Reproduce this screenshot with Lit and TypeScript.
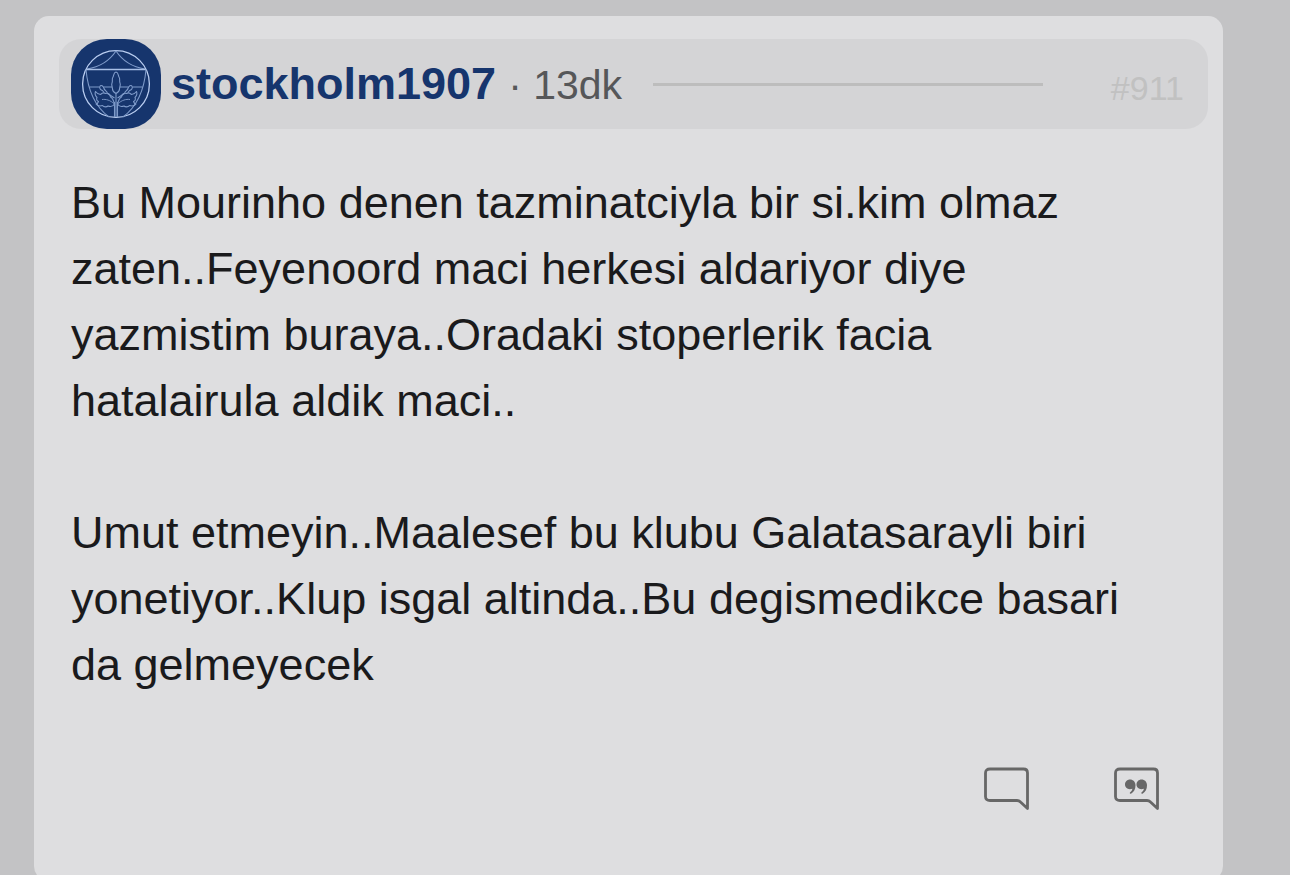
import { LitElement, html, css, svg } from "lit";
import { customElement, property } from "lit/decorators.js";

@customElement("club-avatar")
class ClubAvatar extends LitElement {
  static styles = css`
    :host { display: block; flex: none; }
    .badge { display: block; width: 90px; height: 90px; border-radius: 36px; background: #16356d; }
  `;

  private branch() {
    return svg`
      <path d="M43.500 78V63M43.500 59L36.500 54.500C36 52 33.500 51.500 33 49.500C32.500 47 30 45.500 28.800 47.500C28 49.500 30 51 31.500 51.500L33 53.500"></path>
      <path d="M43.500 65C42.500 61 41.500 59 39.500 58C39 55 37 53.500 34.500 54.500C32.500 53 30.500 54.500 29.500 55.500C27.500 55.500 26 54.500 24.500 52.500C23.500 55 24.500 57 26 58.500C25 60.500 26 62 27.500 62.500C27 64 26 65 25 65C27 67.500 30 67 31.500 66.500C33 68.500 36 68 37 67C39.500 68 42 67.500 43.500 65Z"></path>
      <path d="M31 60.500C35 60 39 61 43.500 65" stroke-width="0.9"></path>`;
  }

  render() {
    return html`<svg class="badge" viewBox="0 0 90 90" fill="none" role="img" aria-label="Avatar">
      <circle cx="45" cy="45" r="33.4" stroke="#b9cdf0" stroke-width="1.3"></circle>
      <g stroke="#7f9bca" stroke-width="1.1" stroke-linejoin="round">
        <path d="M16 30Q35 27 45 12Q55 27 74 30"></path>
        <path d="M15 30.500H75" stroke="#a9c0e6" stroke-width="1.400"></path>
        <path d="M15 30.500C17 54 26 69 38 78M75 30.500C73 54 64 69 52 78"></path>
        <path d="M18.500 48H28M33 48H41M49 48H57M62 48H71.500"></path>
        <path d="M45 33C42.500 33.500 43 36 42 38C40.500 40 42 42 41 44C40 46 41.500 48 41.500 50C41.500 52 43 53.500 45 54.500C47 53.500 48.500 52 48.500 50C48.500 48 50 46 49 44C48 42 49.500 40 48 38C47 36 47.500 33.500 45 33Z"></path>
        <path d="M45 54.500V78"></path>
        ${this.branch()}
        <g transform="translate(90 0) scale(-1 1)">${this.branch()}</g>
      </g>
    </svg>`;
  }
}

@customElement("post-card")
class PostCard extends LitElement {
  @property() author = "";
  @property() age = "";
  @property() number = "";
  @property({ attribute: false }) paragraphs: string[] = [];

  static styles = css`
    :host { display: block; }
    .card { background: #dedee0; border-radius: 15px; padding: 23px 15px 70px 25px; }
    .head { display: flex; align-items: center; height: 90px; padding: 0 24px 0 12px; border-radius: 22px; background: #d4d4d6; }
    .title { display: flex; align-items: baseline; gap: 12px; margin-left: 10px; }
    .author { color: #16356d; font-size: 45px; font-weight: 700; line-height: 90px; text-decoration: none; }
    .age { color: #565759; font-size: 41px; line-height: 1; white-space: nowrap; }
    .rule { flex: 1; height: 3px; margin: 0 68px 0 31px; border: 0; background: #bdbdbd; }
    .number { color: #c1c1c1; font-size: 34px; line-height: 82px; padding-top: 8px; text-decoration: none; }
    .body { padding: 41px 60px 0 12px; color: #1a1a1c; font-size: 45px; line-height: 66px; }
    .body p { margin: 0 0 66px; }
    .actions { display: flex; justify-content: flex-end; gap: 84px; padding: 3px 48px 0 0; }
    .action { display: block; padding: 0; border: 0; background: none; color: #676767; cursor: pointer; }
    .icon { display: block; width: 46px; height: 44px; }
  `;

  private bubble(quoted: boolean) {
    return html`<svg class="icon" viewBox="0 0 46 44" aria-hidden="true">
      <path d="M6 2H39.500Q43.500 2 43.500 6V41.500L36.500 35Q35 33.500 33 33.500H6Q1.500 33.500 1.500 29.500V6Q1.500 2 6 2Z" fill="none" stroke="currentColor" stroke-width="2.800" stroke-linejoin="round"></path>
      ${quoted
        ? svg`<g fill="currentColor"><path d="M16 12.500C19.200 12.500 21.500 14.800 21.500 18.300C21.500 22.200 20 25 17.300 26.500C16 27.200 15.200 26 16.200 25.200C17.400 24.200 18.200 23.100 18.400 21.700C14 23.200 11 20.700 11 17.500C11 14.700 13.200 12.500 16 12.500Z"></path>
          <path d="M27.500 12.500C30.700 12.500 33 14.800 33 18.300C33 22.200 31.500 25 28.800 26.500C27.500 27.200 26.700 26 27.700 25.200C28.900 24.200 29.700 23.100 29.900 21.700C25.500 23.200 22.500 20.700 22.500 17.500C22.500 14.700 24.700 12.500 27.500 12.500Z"></path></g>`
        : null}
    </svg>`;
  }

  render() {
    return html`<article class="card">
      <header class="head">
        <club-avatar></club-avatar>
        <div class="title">
          <a class="author" href="#author">${this.author}</a>
          <span class="age">· ${this.age}</span>
        </div>
        <hr class="rule" />
        <a class="number" href="#post">#${this.number}</a>
      </header>
      <div class="body">${this.paragraphs.map((text) => html`<p>${text}</p>`)}</div>
      <div class="actions">
        <button class="action" type="button" aria-label="Yorum">${this.bubble(false)}</button>
        <button class="action" type="button" aria-label="Alıntı">${this.bubble(true)}</button>
      </div>
    </article>`;
  }
}

@customElement("app-root")
class AppRoot extends LitElement {
  static styles = css`
    :host {
      display: block;
      box-sizing: border-box;
      height: 100vh;
      overflow: hidden;
      padding: 16px 67px 0 34px;
      background: #c3c3c5;
      font-family: "Liberation Sans", Arial, sans-serif;
    }
  `;
  private paragraphs = [
    "Bu Mourinho denen tazminatciyla bir si.kim olmaz zaten..Feyenoord maci herkesi aldariyor diye yazmistim buraya..Oradaki stoperlerik facia hatalairula aldik maci..",
    "Umut etmeyin..Maalesef bu klubu Galatasarayli biri yonetiyor..Klup isgal altinda..Bu degismedikce basari da gelmeyecek",
  ];
  render() {
    return html`<post-card author="stockholm1907" age="13dk" number="911" .paragraphs=${this.paragraphs}></post-card>`;
  }
}
